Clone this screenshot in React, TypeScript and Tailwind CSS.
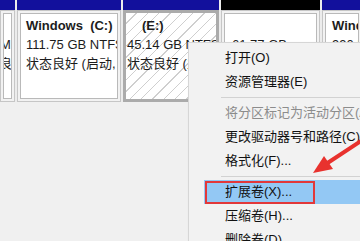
import React from "react";

const font = "font-['Liberation_Sans','Noto_Sans_CJK_SC',sans-serif]";

const menu = [
  { label: "打开(O)" },
  { label: "资源管理器(E)" },
  { sep: true },
  { label: "将分区标记为活动分区(A)", disabled: true },
  { label: "更改驱动器号和路径(C)" },
  { label: "格式化(F)..." },
  { sep: true },
  { label: "扩展卷(X)...", active: true },
  { label: "压缩卷(H)..." },
  { label: "删除卷(D)..." },
];

function Header({ black }: { black?: boolean }) {
  return <div className={`h-[10px] shrink-0 ${black ? "bg-black" : "bg-[#12109c]"}`} />;
}

function Box({ children, className = "" }: { children?: React.ReactNode; className?: string }) {
  return (
    <div className="flex-1 border border-[#c6c6c6] bg-[#f2f2f2] p-[2px]">
      <div className={`h-full overflow-hidden border border-[#b9b9b9] bg-white pt-[2px] ${className}`}>
        {children}
      </div>
    </div>
  );
}

function Row({ children, bold, className = "" }: { children: React.ReactNode; bold?: boolean; className?: string }) {
  return (
    <div className={`whitespace-pre text-[13px] leading-[19px] text-[#1c1c1c] ${bold ? "font-bold" : ""} ${className}`}>
      {children}
    </div>
  );
}

export default function App() {
  return (
    <div className={`relative h-[241px] w-[360px] overflow-hidden bg-[#f0f0f0] ${font}`}>
      {/* disk strip */}
      <div className="flex h-[102px] gap-[2px] bg-[#ececec]">
        <div className="flex w-[15px] shrink-0 flex-col">
          <Header />
          <Box className="pl-0">
            <Row> </Row>
            <Row className="-ml-[4px]">M</Row>
            <Row className="-ml-[5px]">良</Row>
          </Box>
        </div>

        <div className="flex w-[104px] shrink-0 flex-col">
          <Header />
          <Box className="pl-[5px]">
            <Row bold>Windows  (C:)</Row>
            <Row>111.75 GB NTFS</Row>
            <Row>状态良好 (启动, 页面文件)</Row>
          </Box>
        </div>

        <div className="flex w-[96px] shrink-0 flex-col">
          <Header />
          <div className="flex-1 overflow-hidden border-[3px] border-[#ababab] bg-[repeating-linear-gradient(135deg,#ffffff_0px,#ffffff_7px,#cfcfcf_7px,#cfcfcf_8px)] pl-[1px] pt-[3px]">
            <Row bold className="pl-[15px]">(E:)</Row>
            <Row>45.14 GB NTFS</Row>
            <Row>状态良好 (主分区)</Row>
          </div>
        </div>

        <div className="flex w-[99px] shrink-0 flex-col">
          <Header black />
          <Box className="pl-[7px]">
            <Row> </Row>
            <Row>61.77 GB</Row>
            <Row>未分配</Row>
          </Box>
        </div>

        <div className="flex w-[40px] shrink-0 flex-col">
          <Header />
          <Box className="pl-[6px]">
            <Row bold>Windows</Row>
            <Row>990 MB</Row>
          </Box>
        </div>
      </div>

      {/* context menu */}
      <div className="absolute left-[188px] top-[42px] w-[200px] border border-[#d6d6d6] bg-[#f2f2f2] py-[3px] pl-[15px] shadow-[2px_2px_3px_rgba(0,0,0,0.15)]">
        {menu.map((m, i) =>
          m.sep ? (
            <div key={i} className="flex h-[7px] items-center pl-[17px]">
              <div className="h-px flex-1 bg-[#d2d2d2]" />
            </div>
          ) : (
            <div
              key={i}
              className={`relative flex h-[24px] items-center whitespace-nowrap pl-[21px] text-[13px] ${
                m.active ? "bg-[#93c8f4]" : ""
              } ${m.disabled ? "text-[#8c8c8c]" : "text-[#111]"}`}
            >
              {m.label}
              {m.active && (
                <div className="absolute left-[1px] top-[1px] h-[23px] w-[110px] border-[2.5px] border-[#e2383a]" />
              )}
            </div>
          )
        )}
      </div>

      {/* red arrow */}
      <svg className="absolute left-0 top-0" width="360" height="241" viewBox="0 0 360 241">
        <line x1="364" y1="139" x2="326" y2="164" stroke="#e8322e" strokeWidth="4" strokeLinecap="round" />
        <polygon points="313,173 333,169 324,156" fill="#e8322e" />
      </svg>
    </div>
  );
}
